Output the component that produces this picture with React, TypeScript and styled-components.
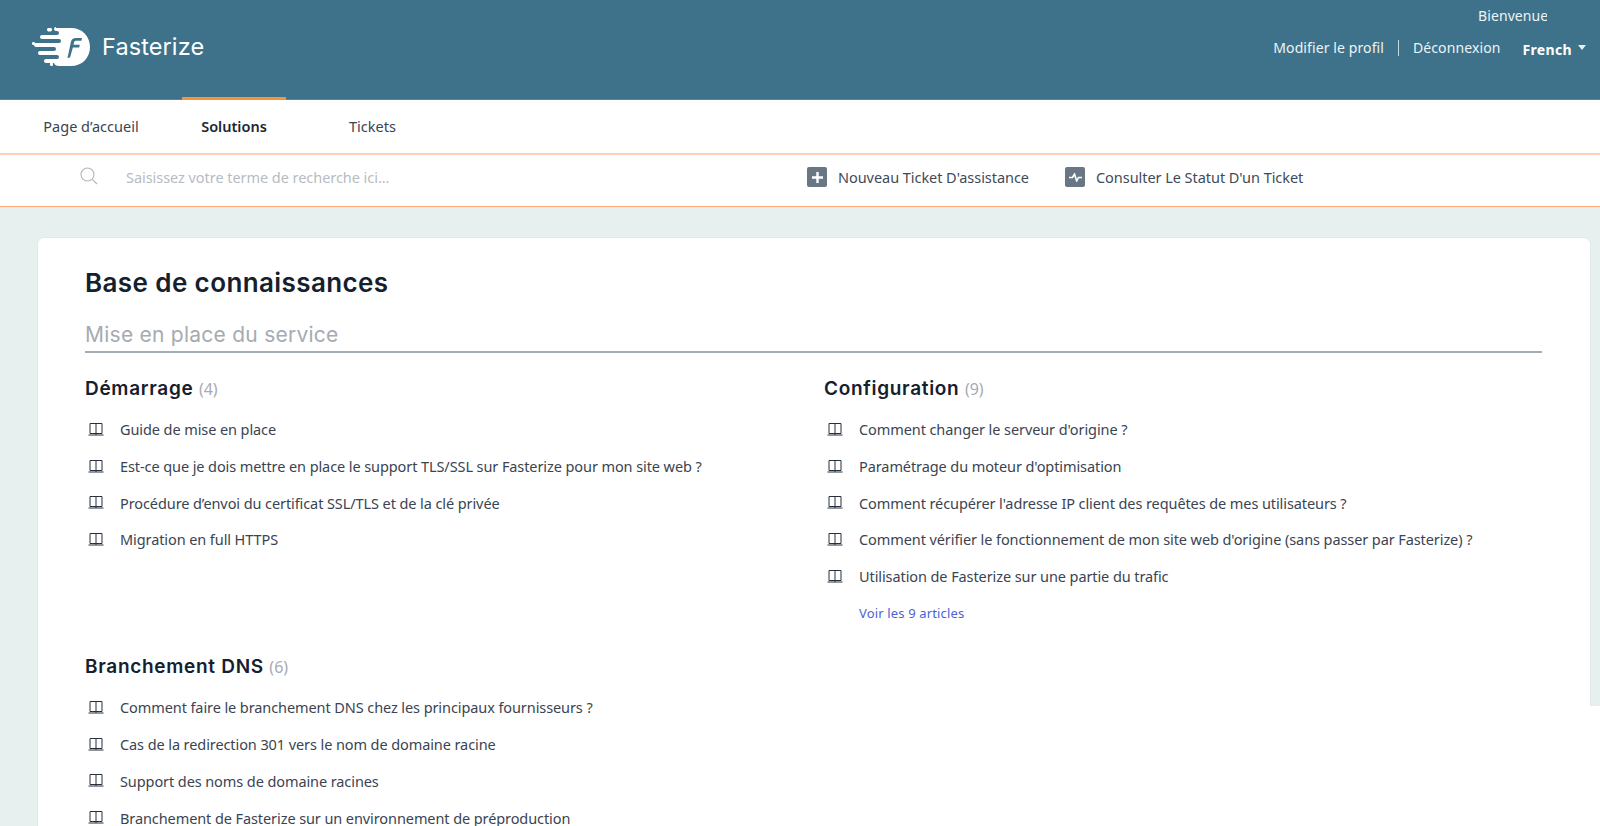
import * as React from "react";
import styled, { createGlobalStyle } from "styled-components";

const GlobalStyle = createGlobalStyle`
  html, body {
    margin: 0;
    padding: 0;
    background: #fff;
  }
  body {
    font-family: "Noto Sans", "Open Sans", sans-serif;
    overflow: hidden;
  }
`;

const Page = styled.div`
  position: relative;
  width: 1600px;
  height: 826px;
  overflow: hidden;
  background: #e8f0ef;
`;

const Header = styled.header`
  height: 100px;
  box-sizing: border-box;
  background: #3d728a;
  border-bottom: 1px solid #5a8598;
  display: flex;
  justify-content: space-between;
`;

const Brand = styled.div`
  display: flex;
  align-items: center;
  gap: 11px;
  padding: 0 0 6px 32px;
`;

const BrandName = styled.span`
  font-family: Inter, sans-serif;
  font-size: 23.5px;
  font-weight: 400;
  letter-spacing: 0.1px;
  color: #fff;
`;

const Account = styled.div`
  display: flex;
  flex-direction: column;
  align-items: flex-end;
  padding: 7px 0 0;
  font-size: 14px;
  color: #eef4f6;
`;

const Welcome = styled.div`
  width: 69px;
  height: 18px;
  margin-right: 53px;
  overflow: hidden;
  white-space: nowrap;
  letter-spacing: 0.1px;
  line-height: 18px;
`;

const AccountRow = styled.div`
  display: flex;
  align-items: center;
  margin-top: 11px;
  padding-right: 14px;
  letter-spacing: 0.1px;
`;

const AccountLink = styled.span`
  line-height: 20px;
`;

const Divider = styled.span`
  width: 1px;
  height: 16px;
  margin: 0 14px;
  background: #c9d9e0;
`;

const Language = styled.span`
  display: flex;
  align-items: center;
  gap: 6px;
  margin: 4px 0 0 22px;
  font-weight: 700;
  letter-spacing: 0.35px;
  color: #fff;
  &::after {
    content: "";
    margin-top: -4px;
    border-left: 4.5px solid transparent;
    border-right: 4.5px solid transparent;
    border-top: 5px solid #e8eff2;
  }
`;

const Tabs = styled.nav`
  height: 55px;
  box-sizing: border-box;
  background: #fff;
  display: flex;
  border-top: 1px solid #fff;
  border-bottom: 2px solid #fdd0b4;
`;

const Tab = styled.div<{ $active?: boolean; $width: number }>`
  position: relative;
  width: ${(p) => p.$width}px;
  display: flex;
  align-items: center;
  justify-content: center;
  padding-bottom: 3px;
  box-sizing: border-box;
  font-size: 14.5px;
  font-weight: ${(p) => (p.$active ? 600 : 400)};
  color: ${(p) => (p.$active ? "#1d2633" : "#3a4452")};
  ${(p) =>
    p.$active &&
    `&::before {
      content: "";
      position: absolute;
      top: -4px;
      left: 0;
      right: 0;
      height: 3px;
      background: #f79433;
    }`}
`;

const SearchBar = styled.div`
  height: 52px;
  box-sizing: border-box;
  background: #fff;
  border-bottom: 1px solid #fda872;
  display: flex;
  align-items: center;
  padding-bottom: 7px;
  font-size: 14.5px;
  letter-spacing: -0.05px;
`;

const SearchIcon = styled.svg`
  width: 18px;
  height: 18px;
  margin: -2px 0 0 80px;
  color: #b0b6bc;
`;

const SearchHint = styled.span`
  width: 681px;
  margin-left: 28px;
  color: #b7bcc2;
`;

const Action = styled.div<{ $width: number }>`
  width: ${(p) => p.$width}px;
  display: flex;
  align-items: center;
  gap: 11px;
  color: #3f4a58;
`;

const ActionBadge = styled.span`
  width: 20px;
  height: 20px;
  border-radius: 2px;
  background: #697785;
  display: flex;
  align-items: center;
  justify-content: center;
`;

const Card = styled.main`
  margin: 31px 10px 0 38px;
  height: 640px;
  box-sizing: border-box;
  padding: 27px 48px 0 47px;
  background: #fff;
  border-radius: 6px 6px 0 0;
  box-shadow: 0 0 0 1px #e0e8ea;
`;

const Title = styled.h1`
  margin: 0;
  font-family: Inter, sans-serif;
  font-size: 26px;
  line-height: 36px;
  font-weight: 600;
  letter-spacing: 0.4px;
  color: #14202e;
`;

const SectionTitle = styled.h2`
  margin: 17px 0 0;
  height: 35px;
  box-sizing: border-box;
  border-bottom: 2px solid #a4acb6;
  font-family: Inter, sans-serif;
  font-size: 21px;
  line-height: 33px;
  font-weight: 400;
  letter-spacing: 0.25px;
  color: #a6abb2;
`;

const Columns = styled.div`
  display: grid;
  grid-template-columns: 739px 1fr;
  row-gap: 22px;
  margin-top: 22px;
`;

const Category = styled.section``;

const CategoryTitle = styled.h3`
  margin: 0 0 8px;
  font-family: Inter, sans-serif;
  font-size: 19px;
  line-height: 28px;
  font-weight: 600;
  letter-spacing: 0.7px;
  color: #14202e;
`;

const Count = styled.span`
  font-family: "Noto Sans", sans-serif;
  font-size: 16px;
  font-weight: 400;
  color: #a6abb2;
  letter-spacing: 0;
`;

const Article = styled.div`
  height: 36.7px;
  display: flex;
  align-items: center;
  gap: 16px;
  padding-left: 3px;
  font-size: 14.5px;
  letter-spacing: -0.09px;
  white-space: nowrap;
  color: #3a4452;
`;

const BookGlyph = styled.svg`
  flex: none;
  width: 16px;
  height: 15px;
  color: #27303c;
`;

const MoreLink = styled.a`
  display: block;
  height: 36.7px;
  line-height: 38.7px;
  padding-left: 35px;
  font-size: 13px;
  letter-spacing: 0.15px;
  color: #4a63d8;
`;

const RightPatch = styled.div`
  position: absolute;
  top: 706px;
  right: 0;
  bottom: 0;
  width: 11px;
  background: #fff;
`;

function Book() {
  return (
    <BookGlyph viewBox="0 0 16 15" fill="none" stroke="currentColor" strokeWidth="1">
      <path d="M2 1.500h12v10H2zM8 1.500v11.500" />
      <path d="M.5 13h15" />
    </BookGlyph>
  );
}

function Logo() {
  return (
    <svg width="59" height="40" viewBox="0 0 59 40">
      <path
        d="M24 1h15c11 0 19 8 19 19s-8 19-19 19H27c-3 0-5-2-5-3h-8a2 2 0 0 1 0-4h11a2 2 0 0 0 0-4H8a2 2 0 0 1 0-4h14a2 2 0 0 0 0-4H4a2 2 0 0 1 0-4h23a2 2 0 0 0 0-4H10a2 2 0 0 1 0-4h15a2 2 0 0 0 0-4h-1a2 2 0 0 1 0-4z"
        fill="#fff"
      />
      <rect x="15" y="1" width="5" height="3.400" rx="1.400" fill="#fff" />
      <rect x="0" y="15" width="3" height="3" rx="1.200" fill="#fff" />
      <rect x="18" y="35.500" width="3" height="3.400" rx="1.200" fill="#fff" />
      <path
        d="M35.500 31l3.400-16c.5-2.600 2.400-4 5-4H50l-.6 2.800h-5.400c-1 0-1.700.5-2 1.700l-.5 2.300h6.300l-.6 2.800h-6.300L38 30.500z"
        fill="#3d728a"
      />
    </svg>
  );
}

const demarrage = [
  "Guide de mise en place",
  "Est-ce que je dois mettre en place le support TLS/SSL sur Fasterize pour mon site web ?",
  "Procédure d’envoi du certificat SSL/TLS et de la clé privée",
  "Migration en full HTTPS",
];

const configuration = [
  "Comment changer le serveur d'origine ?",
  "Paramétrage du moteur d'optimisation",
  "Comment récupérer l'adresse IP client des requêtes de mes utilisateurs ?",
  "Comment vérifier le fonctionnement de mon site web d'origine (sans passer par Fasterize) ?",
  "Utilisation de Fasterize sur une partie du trafic",
];

const dns = [
  "Comment faire le branchement DNS chez les principaux fournisseurs ?",
  "Cas de la redirection 301 vers le nom de domaine racine",
  "Support des noms de domaine racines",
  "Branchement de Fasterize sur un environnement de préproduction",
];

function ArticleList({ items }: { items: string[] }) {
  return (
    <>
      {items.map((item) => (
        <Article key={item}>
          <Book />
          {item}
        </Article>
      ))}
    </>
  );
}

export default function App() {
  return (
    <Page>
      <GlobalStyle />
      <Header>
        <Brand>
          <Logo />
          <BrandName>Fasterize</BrandName>
        </Brand>
        <Account>
          <Welcome>Bienvenue</Welcome>
          <AccountRow>
            <AccountLink>Modifier le profil</AccountLink>
            <Divider />
            <AccountLink>Déconnexion</AccountLink>
            <Language>French</Language>
          </AccountRow>
        </Account>
      </Header>
      <Tabs>
        <Tab $width={182}>Page d’accueil</Tab>
        <Tab $width={104} $active>
          Solutions
        </Tab>
        <Tab $width={173}>Tickets</Tab>
      </Tabs>
      <SearchBar>
        <SearchIcon viewBox="0 0 18 18" fill="none" stroke="currentColor" strokeWidth="1.1">
          <circle cx="7.500" cy="7.500" r="6.500" />
          <path d="M12.300 12.300L17 17" />
        </SearchIcon>
        <SearchHint>Saisissez votre terme de recherche ici...</SearchHint>
        <Action $width={258}>
          <ActionBadge>
            <svg width="11" height="11" viewBox="0 0 11 11">
              <path d="M4.300 0h2.400v4.300H11v2.400H6.700V11H4.300V6.700H0V4.300h4.300z" fill="#fff" />
            </svg>
          </ActionBadge>
          Nouveau Ticket D'assistance
        </Action>
        <Action $width={300}>
          <ActionBadge>
            <svg width="13" height="9" viewBox="0 0 13 9" fill="none" stroke="#fff" strokeWidth="1.6">
              <path d="M0 4.500h3.500L5.500 1l2.200 7 1.800-3.500H13" />
            </svg>
          </ActionBadge>
          Consulter Le Statut D'un Ticket
        </Action>
      </SearchBar>
      <Card>
        <Title>Base de connaissances</Title>
        <SectionTitle>Mise en place du service</SectionTitle>
        <Columns>
          <Category>
            <CategoryTitle>
              Démarrage <Count>(4)</Count>
            </CategoryTitle>
            <ArticleList items={demarrage} />
          </Category>
          <Category>
            <CategoryTitle>
              Configuration <Count>(9)</Count>
            </CategoryTitle>
            <ArticleList items={configuration} />
            <MoreLink>Voir les 9 articles</MoreLink>
          </Category>
          <Category>
            <CategoryTitle>
              Branchement DNS <Count>(6)</Count>
            </CategoryTitle>
            <ArticleList items={dns} />
          </Category>
        </Columns>
      </Card>
      <RightPatch />
    </Page>
  );
}
